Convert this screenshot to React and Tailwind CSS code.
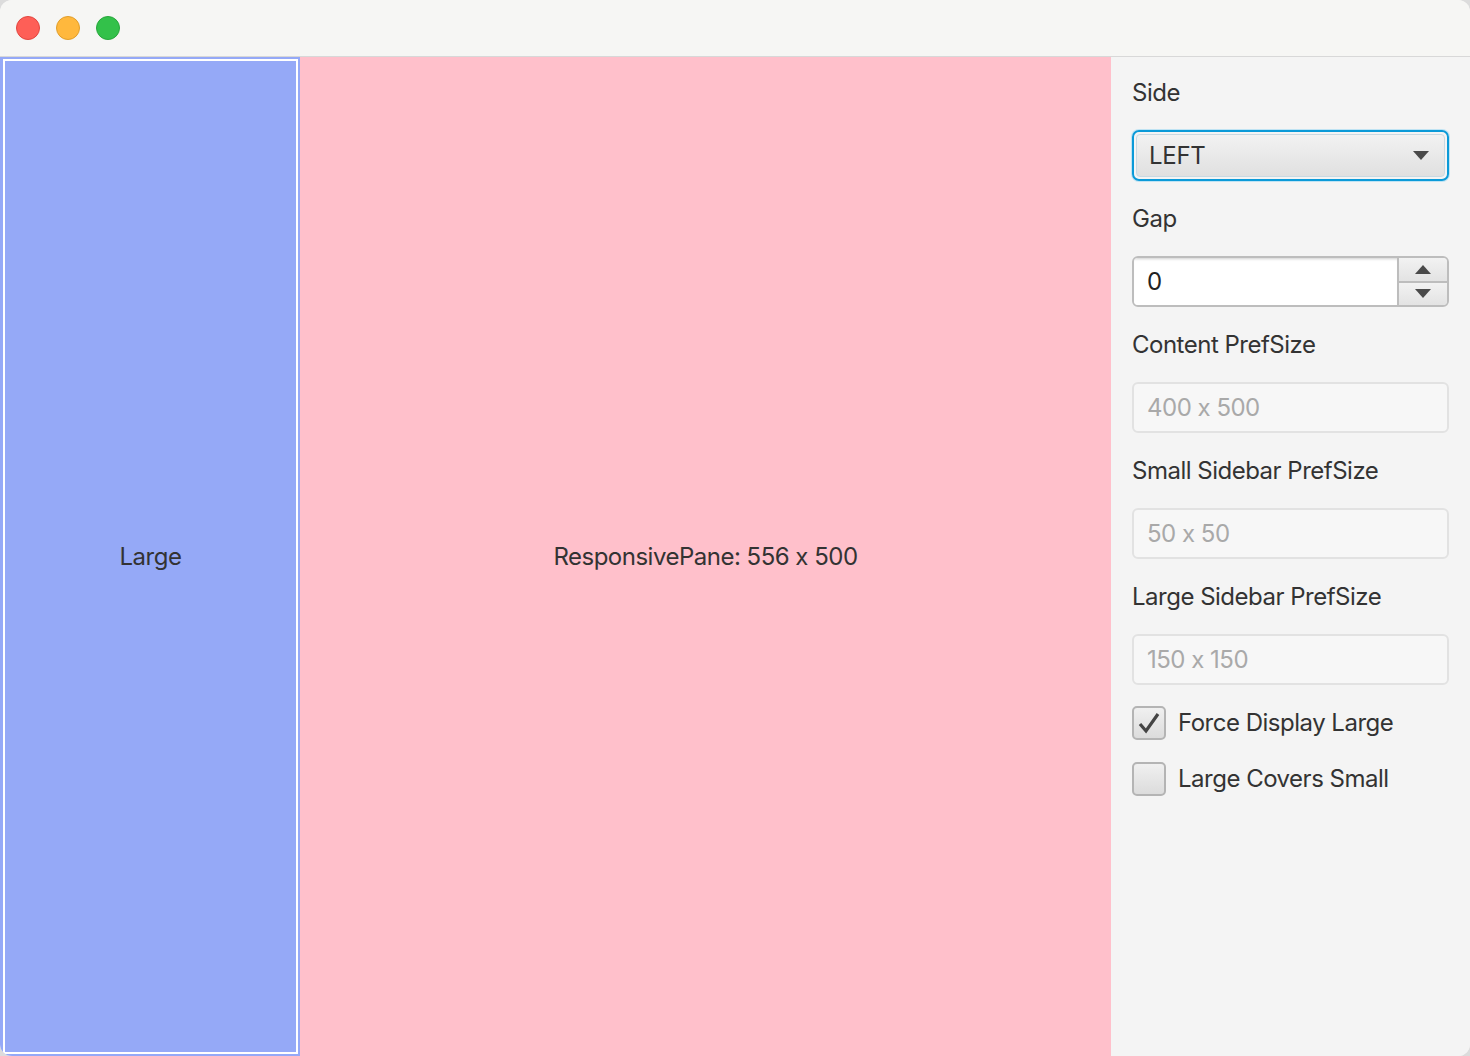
import React from 'react';

const font = { fontFamily: 'Inter, "Liberation Sans", sans-serif' };

const Label = ({ children }) => (
    <div className="h-[35px] flex items-center text-[24px] text-[#333333] tracking-[-0.5px]">{children}</div>
);

const DisabledField = ({ value }) => (
    <div className="h-[51px] rounded-[6px] border-2 border-[#e2e2e2] bg-[#f7f7f7] flex items-center px-[13px] text-[24px] text-[#a9a9a9] tracking-[-0.5px]">
        {value}
    </div>
);

const Triangle = ({ up }) => (
    <svg width="18" height="10" viewBox="0 0 18 10">
        {up ? <polygon points="1,10 17,10 9,1" fill="#4a4a4a" /> : <polygon points="1,0 17,0 9,9" fill="#4a4a4a" />}
    </svg>
);

const CheckBox = ({ checked, label }) => (
    <div className="h-[36px] flex items-center gap-[12px]">
        <div className="w-[34px] h-[34px] rounded-[5px] border-2 border-[#b4b4b4] bg-gradient-to-b from-[#f0f0f0] to-[#dcdcdc] flex items-center justify-center">
            {checked && (
                <svg width="24" height="24" viewBox="0 0 24 24">
                    <path d="M3 13 L9 20 L21 3" fill="none" stroke="#444444" strokeWidth="3.2" strokeLinejoin="miter" />
                </svg>
            )}
        </div>
        <span className="text-[24px] text-[#333333] tracking-[-0.5px]">{label}</span>
    </div>
);

export default function App() {
    return (
        <div className="w-[1470px] h-[1056px] bg-[#dcdcdc]" style={font}>
            <div className="w-full h-full rounded-[12px] overflow-hidden flex flex-col bg-[#f4f4f4]">
                {/* title bar */}
                <div className="h-[57px] shrink-0 bg-[#f6f6f4] border-b border-[#d8d8d8] flex items-center gap-[16px] pl-[16px]">
                    <div className="w-[24px] h-[24px] rounded-full bg-[#fe5f57] border border-[#e2463f]" />
                    <div className="w-[24px] h-[24px] rounded-full bg-[#ffb83d] border border-[#e19e2a]" />
                    <div className="w-[24px] h-[24px] rounded-full bg-[#33c14a] border border-[#27a73b]" />
                </div>

                <div className="flex flex-1 min-h-0">
                    {/* large sidebar */}
                    <div className="w-[300px] shrink-0 bg-[#95a9f7] p-[2px] pl-[3px] pr-[2px]">
                        <div className="h-full border-2 border-white flex items-center justify-center text-[24px] text-[#333333] tracking-[-0.5px]">
                            Large
                        </div>
                    </div>

                    {/* content */}
                    <div className="w-[811px] shrink-0 bg-[#ffc0cb] flex items-center justify-center text-[24px] text-[#333333] tracking-[-0.5px]">
                        ResponsivePane: 556 x 500
                    </div>

                    {/* controls */}
                    <div className="flex-1 bg-[#f4f4f4] pt-[18px] px-[21px] flex flex-col gap-[20px]">
                        <Label>Side</Label>
                        <div className="h-[51px] rounded-[7px] border-2 border-[#0b9ad8] shadow-[0_0_0_1px_#bfe3f3] p-[2px]">
                            <div className="h-full rounded-[4px] bg-gradient-to-b from-[#f2f2f2] to-[#e0e0e0] border border-[#c9d9e2] flex items-center justify-between pl-[12px] pr-[14px] text-[24px] text-[#333333] tracking-[-0.3px]">
                                <span>LEFT</span>
                                <Triangle />
                            </div>
                        </div>
                        <Label>Gap</Label>
                        <div className="h-[51px] flex rounded-[6px] border-2 border-[#bdbdbd] overflow-hidden">
                            <div className="flex-1 bg-white flex items-center px-[13px] text-[24px] text-[#222222] shadow-[inset_0_3px_3px_-2px_#d0d0d0]">0</div>
                            <div className="w-[50px] border-l-2 border-[#bdbdbd] flex flex-col">
                                <div className="flex-1 bg-gradient-to-b from-[#f2f2f2] to-[#e3e3e3] border-b-2 border-[#bdbdbd] flex items-center justify-center">
                                    <Triangle up />
                                </div>
                                <div className="flex-1 bg-gradient-to-b from-[#f2f2f2] to-[#e3e3e3] flex items-center justify-center">
                                    <Triangle />
                                </div>
                            </div>
                        </div>
                        <Label>Content PrefSize</Label>
                        <DisabledField value="400 x 500" />
                        <Label>Small Sidebar PrefSize</Label>
                        <DisabledField value="50 x 50" />
                        <Label>Large Sidebar PrefSize</Label>
                        <DisabledField value="150 x 150" />
                        <CheckBox checked label="Force Display Large" />
                        <CheckBox label="Large Covers Small" />
                    </div>
                </div>
            </div>
        </div>
    );
}
